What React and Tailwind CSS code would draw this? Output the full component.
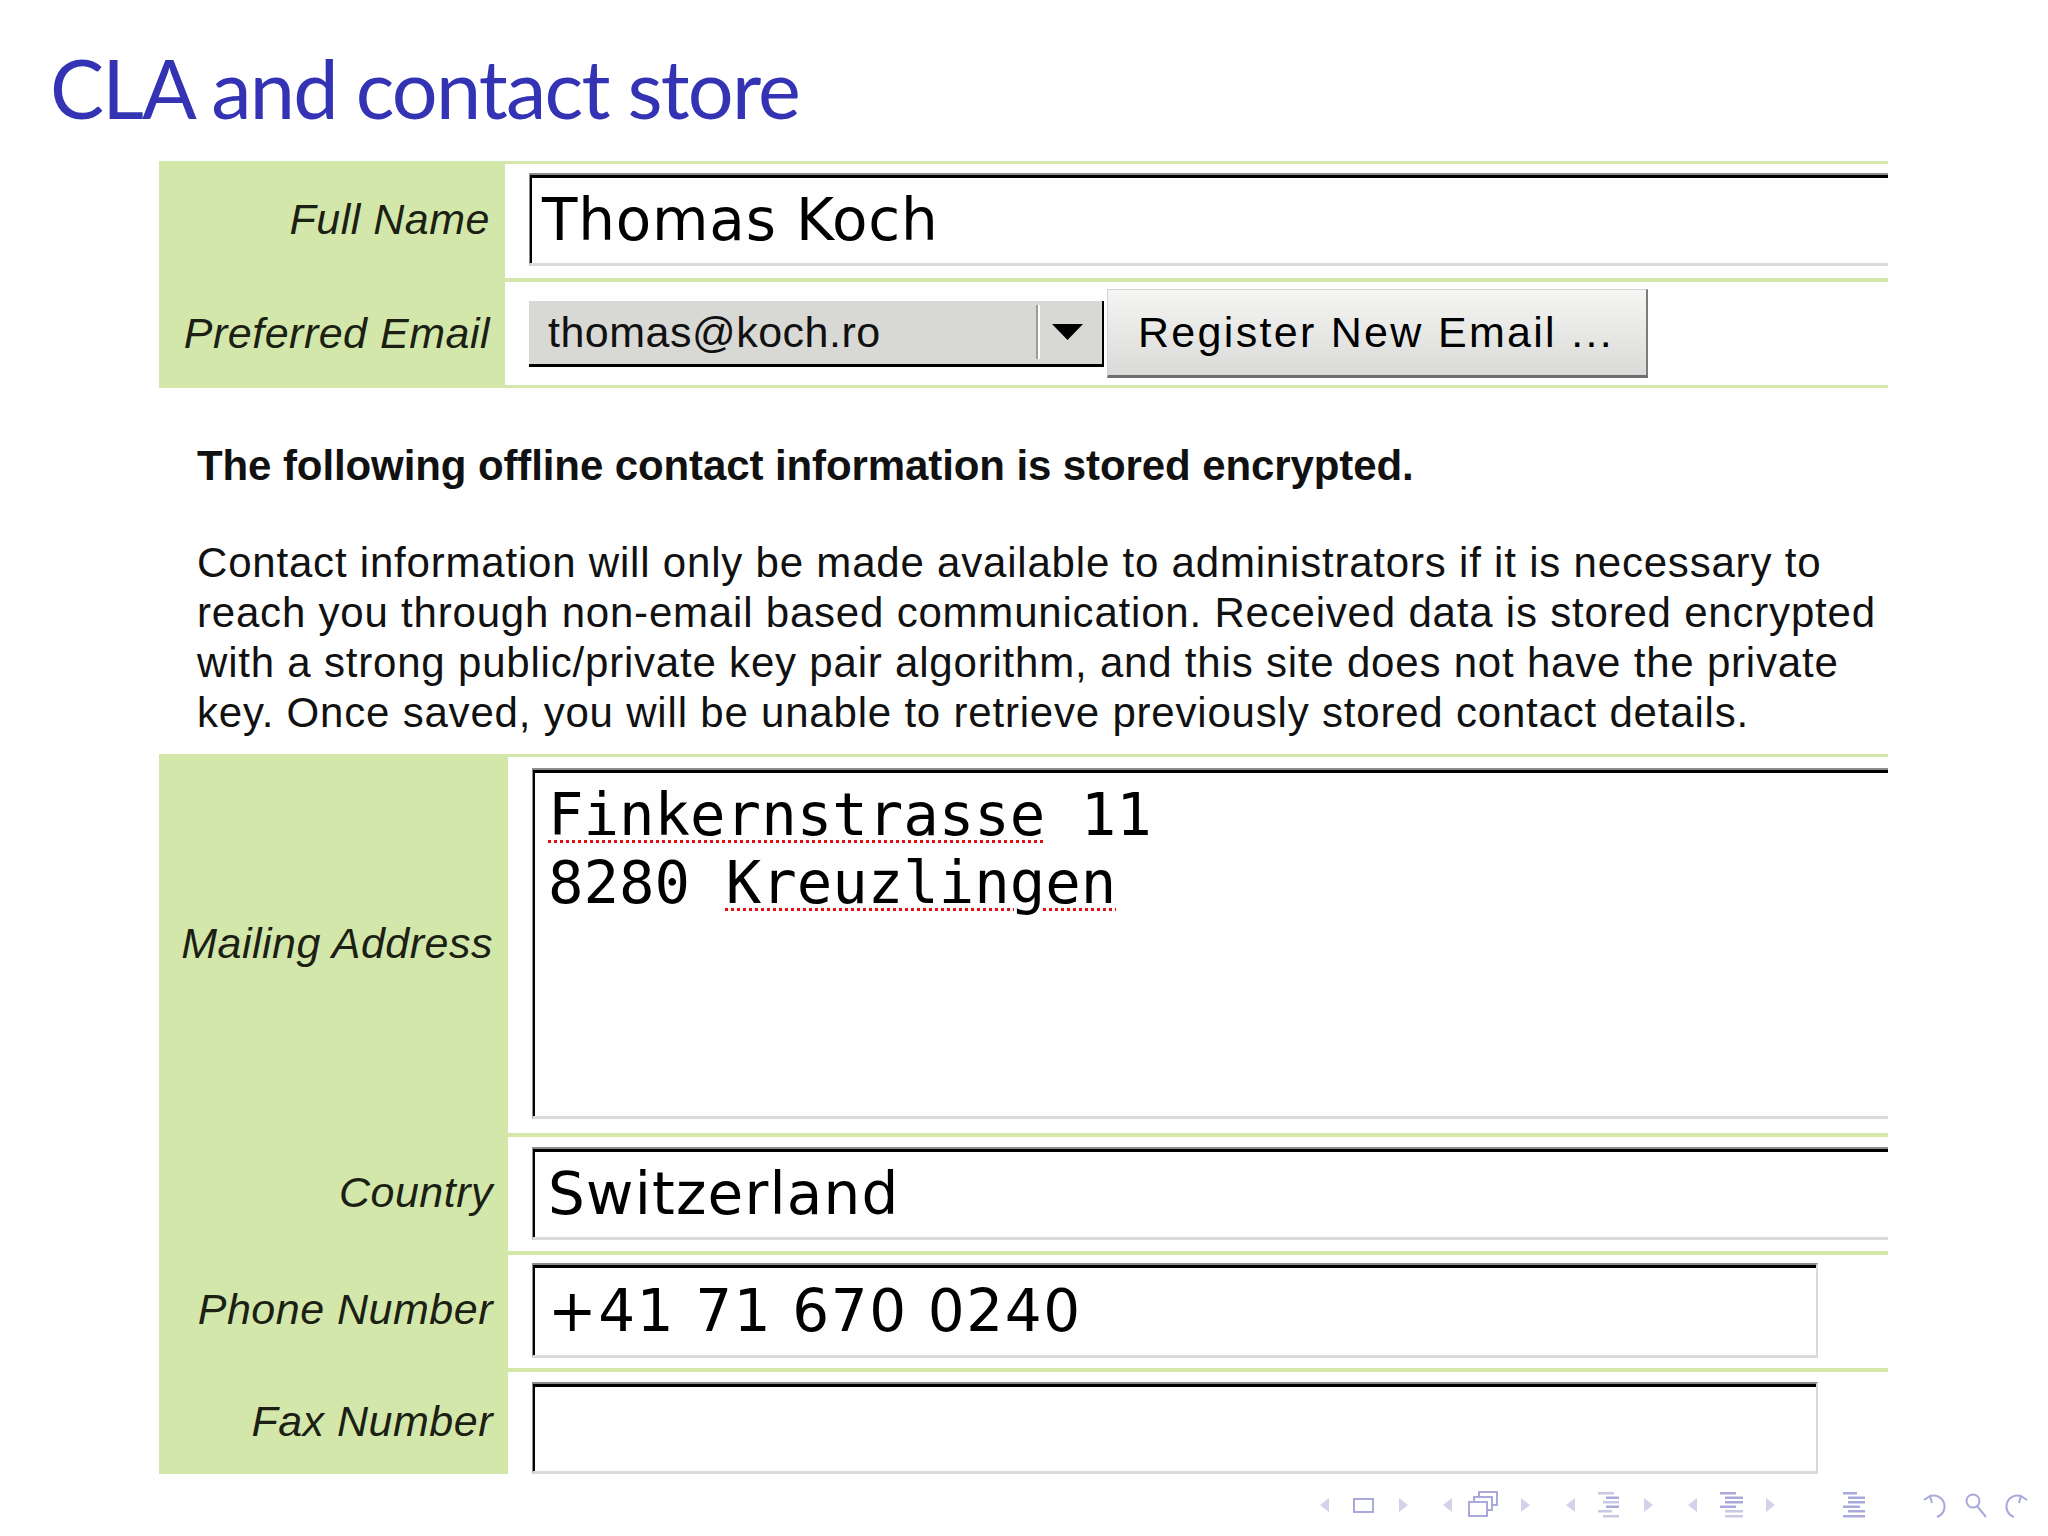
import React from "react";

const Label = ({ children }) => (
    <div className="bg-[#d4e7aa] flex items-center justify-end pr-[15px] text-[43px] italic leading-none tracking-[0.5px] text-[#1b1f14] font-['Liberation_Sans',Arial,sans-serif]">
        {children}
    </div>
);

// sunken GTK-style text box: dark top/left, light bottom
const Box = ({ className, children }) => (
    <div
        className={`border-t-2 border-l border-t-[#8c8c8c] border-l-[#8c8c8c] border-b-[3px] border-b-[#dadada] bg-[#fefefe] ${className}`}
    >
        <div className="h-full border-t-[3px] border-l-2 border-black">{children}</div>
    </div>
);

const BigText = ({ className, children }) => (
    <div className={`h-full flex items-center text-[58px] text-black font-['DejaVu_Sans',sans-serif] ${className}`}>
        {children}
    </div>
);

const NavBar = () => (
    <svg width="730" height="34" viewBox="1310 1488 730 34" className="block">
        {/* frame */}
        <path d="M1329 1498 L1320 1505 L1329 1512 Z" fill="#d2d2ea" />
        <rect x="1354" y="1499" width="19" height="13" fill="none" stroke="#a9a9db" strokeWidth="2" />
        <path d="M1399 1498 L1408 1505 L1399 1512 Z" fill="#d2d2ea" />
        {/* subsection */}
        <path d="M1452 1498 L1443 1505 L1452 1512 Z" fill="#d2d2ea" />
        <rect x="1479" y="1492" width="18" height="13" fill="#fff" stroke="#a9a9db" strokeWidth="2" />
        <rect x="1474" y="1497" width="18" height="13" fill="#fff" stroke="#a9a9db" strokeWidth="2" />
        <rect x="1469" y="1502" width="18" height="14" fill="#fff" stroke="#a9a9db" strokeWidth="2" />
        <path d="M1521 1498 L1530 1505 L1521 1512 Z" fill="#d2d2ea" />
        {/* section */}
        <path d="M1575 1498 L1566 1505 L1575 1512 Z" fill="#d2d2ea" />
        <g fill="#c9c9e6">
            <rect x="1598" y="1492" width="16" height="2.5" />
            <rect x="1603" y="1501" width="16" height="2.5" />
            <rect x="1598" y="1510" width="14" height="2.5" />
            <rect x="1603" y="1515" width="16" height="2.5" />
        </g>
        <g fill="#a9a9db">
            <rect x="1606" y="1496.5" width="13" height="2.5" />
            <rect x="1606" y="1505.5" width="13" height="2.5" />
        </g>
        <path d="M1644 1498 L1653 1505 L1644 1512 Z" fill="#d2d2ea" />
        {/* document */}
        <path d="M1697 1498 L1688 1505 L1697 1512 Z" fill="#d2d2ea" />
        <g fill="#a9a9db">
            <rect x="1720" y="1492" width="16" height="2.5" />
            <rect x="1725" y="1496.5" width="18" height="2.5" />
            <rect x="1725" y="1501" width="18" height="2.5" />
            <rect x="1720" y="1505.5" width="16" height="2.5" />
        </g>
        <g fill="#c9c9e6">
            <rect x="1725" y="1510" width="18" height="2.5" />
            <rect x="1725" y="1515" width="18" height="2.5" />
        </g>
        <path d="M1766 1498 L1775 1505 L1766 1512 Z" fill="#d2d2ea" />
        {/* appendix */}
        <g fill="#a9a9db">
            <rect x="1843" y="1492" width="14" height="2.5" />
            <rect x="1848" y="1496.5" width="17" height="2.5" />
            <rect x="1848" y="1501" width="17" height="2.5" />
            <rect x="1843" y="1505.5" width="17" height="2.5" />
            <rect x="1848" y="1510" width="17" height="2.5" />
            <rect x="1843" y="1515" width="22" height="2.5" />
        </g>
        {/* back, search, forward */}
        <g fill="none" stroke="#a9a9db" strokeWidth="2">
            <path d="M1930 1496 A11 11 0 1 1 1937 1517" />
            <path d="M1924 1500 L1930 1496 L1932 1503" />
            <circle cx="1973" cy="1501" r="6.5" />
            <path d="M1977 1506 L1986 1517" />
            <path d="M2021 1496 A11 11 0 1 0 2014 1517" />
            <path d="M2027 1500 L2021 1496 L2019 1503" />
        </g>
    </svg>
);

export default function App() {
    const sans = "font-['Liberation_Sans',Arial,sans-serif]";
    return (
        <div className="w-[2048px] h-[1536px] bg-white overflow-hidden">
            {/* frame title */}
            <div className="pl-[50px] pt-[47px] text-[81px] leading-none tracking-[-1.8px] text-[#3333b3] font-['Lato','Open_Sans',sans-serif]">
                CLA and contact store
            </div>

            <div className="ml-[159px] mt-[33px] w-[1729px]">
                {/* account info */}
                <div className="grid grid-cols-[346px_1383px] grid-rows-[117px_110px]">
                    <Label>Full Name</Label>
                    <div className="border-t-[3px] border-[#d4e7aa] pl-[24px] pt-[9px]">
                        <Box className="h-[93px]">
                            <BigText className="pl-[10px] tracking-[0.8px]">Thomas Koch</BigText>
                        </Box>
                    </div>
                    <Label>Preferred Email</Label>
                    <div className="border-t-4 border-b-[3px] border-[#d4e7aa] pl-[24px] flex items-center gap-[3px]">
                        <div className="w-[575px] h-[66px] bg-[#d8d8d4] border-b-[3px] border-r-2 border-black flex items-center">
                            <span className={`flex-1 pl-[19px] text-[43px] leading-none tracking-[0.5px] text-[#111] ${sans}`}>
                                thomas@koch.ro
                            </span>
                            <div className="h-[54px] w-[4px] border-l-2 border-[#9a9a9a] bg-white" />
                            <svg width="31" height="16" viewBox="0 0 31 16" className="ml-[12px] mr-[19px]">
                                <path d="M0 0 H31 L15.5 16 Z" fill="#000" />
                            </svg>
                        </div>
                        <div className={`w-[541px] h-[89px] bg-linear-to-b from-[#f5f5f3] to-[#dadad8] border-t border-l border-[#d2d2d0] border-r-2 border-r-[#7c7c7c] border-b-[3px] border-b-[#6e6e6e] pl-[30px] flex items-center text-[43px] leading-none tracking-[2.3px] text-black ${sans}`}>
                            Register New Email ...
                        </div>
                    </div>
                </div>

                {/* notice */}
                <div className={`pl-[38px] pt-[57px] pb-[16px] text-[#111] ${sans}`}>
                    <div className="text-[42px] leading-none font-bold tracking-[-0.1px] whitespace-nowrap">
                        The following offline contact information is stored encrypted.
                    </div>
                    <p className="mt-[51px] text-[42px] leading-[50px] tracking-[0.8px] whitespace-nowrap">
                        Contact information will only be made available to administrators if it is necessary to
                        <br />
                        reach you through non-email based communication. Received data is stored encrypted
                        <br />
                        with a strong public/private key pair algorithm, and this site does not have the private
                        <br />
                        key. Once saved, you will be unable to retrieve previously stored contact details.
                    </p>
                </div>

                {/* encrypted contact details */}
                <div className="grid grid-cols-[349px_1380px] grid-rows-[379px_118px_117px_106px]">
                    <Label>Mailing Address</Label>
                    <div className="border-t-[3px] border-[#d4e7aa] pl-[24px] pt-[11px]">
                        <Box className="h-[351px]">
                            <div className="pl-[13px] pt-[8px] text-[59px] leading-[68px] text-black font-['DejaVu_Sans_Mono',monospace] whitespace-pre">
                                <span className="underline decoration-dotted decoration-[#e01010] decoration-[3px] underline-offset-[5px]">
                                    Finkernstrasse
                                </span>{" "}
                                11
                                <br />
                                8280{" "}
                                <span className="underline decoration-dotted decoration-[#e01010] decoration-[3px] underline-offset-[5px]">
                                    Kreuzlingen
                                </span>
                            </div>
                        </Box>
                    </div>

                    <Label>Country</Label>
                    <div className="border-t-4 border-[#d4e7aa] pl-[24px] pt-[10px]">
                        <Box className="h-[93px]">
                            <BigText className="pl-[13px] tracking-[1.2px]">Switzerland</BigText>
                        </Box>
                    </div>

                    <Label>Phone Number</Label>
                    <div className="border-t-4 border-[#d4e7aa] pl-[24px] pt-[8px]">
                        <Box className="h-[95px] w-[1286px] border-r-2 border-r-[#dadada]">
                            <BigText className="pl-[13px] tracking-[1.6px]">+41 71 670 0240</BigText>
                        </Box>
                    </div>

                    <Label>Fax Number</Label>
                    <div className="border-t-4 border-[#d4e7aa] pl-[24px] pt-[10px]">
                        <Box className="h-[92px] w-[1286px] border-r-2 border-r-[#dadada]" />
                    </div>
                </div>
            </div>

            {/* beamer navigation symbols */}
            <div className="flex justify-end pr-[8px] mt-[14px]">
                <NavBar />
            </div>
        </div>
    );
}
